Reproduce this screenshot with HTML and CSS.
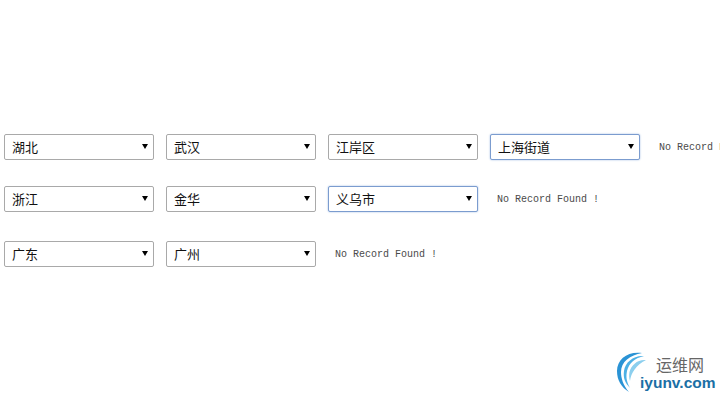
FILE: index.html
```html
<!DOCTYPE html>
<html lang="zh">
<head>
    <meta charset="UTF-8">
    <title>地区选择</title>
    <link rel="stylesheet" href="styles.css">
</head>
<body>
    <div class="region-list">
        <div class="region-row">
            <div class="picker"><select><option>湖北</option></select></div>
            <div class="picker"><select><option>武汉</option></select></div>
            <div class="picker"><select><option>江岸区</option></select></div>
            <div class="picker"><select class="focused"><option>上海街道</option></select></div>
            <span class="no-record">No Record Found !</span>
        </div>
        <div class="region-row">
            <div class="picker"><select><option>浙江</option></select></div>
            <div class="picker"><select><option>金华</option></select></div>
            <div class="picker"><select class="focused"><option>义乌市</option></select></div>
            <span class="no-record">No Record Found !</span>
        </div>
        <div class="region-row row-last">
            <div class="picker"><select><option>广东</option></select></div>
            <div class="picker"><select><option>广州</option></select></div>
            <span class="no-record">No Record Found !</span>
        </div>
    </div>

    <div class="watermark">
        <svg class="watermark-icon" width="60" height="50" viewBox="0 0 60 50">
            <path d="M32 8C18 6 7 14 7 26C7 35 11 42 19 47C13 40 11 33 11 27C11 17 20 10 32 8Z" fill="#2a93d5"/>
            <path d="M34 11C24 10 15 17 14 26C13 33 15 38 20 43C16 36 16 31 17 26C19 18 25 13 34 11Z" fill="#4cb0e5"/>
            <path d="M36 15C28 14 21 20 19.500 27C19 30 19 33 20 36C21 28 26 20 36 15Z" fill="#8ccfee"/>
        </svg>
        <div class="watermark-title">运维网</div>
        <div class="watermark-site">iyunv.com</div>
    </div>
</body>
</html>
```

FILE: styles.css
```css
html, body {
    height: 100%;
}
body {
    margin: 0;
    overflow: hidden;
    background: #fff;
    position: relative;
}
.region-list {
    padding: 134px 0 0 4px;
}
.region-row {
    display: flex;
    align-items: center;
    gap: 12px;
    width: 900px;
    margin-bottom: 26px;
}
.row-last {
    margin-top: 29px;
}
.picker {
    position: relative;
    width: 150px;
    height: 26px;
    flex: none;
}
.picker::after {
    content: "";
    position: absolute;
    right: 6px;
    top: 10px;
    border-left: 3.500px solid transparent;
    border-right: 3.500px solid transparent;
    border-top: 5px solid #000;
}
select {
    appearance: none;
    width: 100%;
    height: 100%;
    padding: 0 20px 2px 7px;
    box-sizing: border-box;
    background: #fff;
    border: 1px solid #a9a9a9;
    border-radius: 2px;
    outline: 0;
    color: #111;
    font-family: "Noto Sans CJK SC", sans-serif;
    font-size: 13px;
}
select.focused {
    border-color: #7b9ccf;
    box-shadow: 0 0 2px #9db8e0;
}
.no-record {
    margin-left: 7px;
    flex: none;
    color: #4a4a4a;
    font-family: "Liberation Mono", monospace;
    font-size: 10px;
}
.watermark {
    position: absolute;
    left: 610px;
    top: 345px;
    width: 110px;
    height: 50px;
}
.watermark-icon {
    position: absolute;
    left: 0;
    top: 0;
}
.watermark-title {
    position: absolute;
    left: 46px;
    top: 9px;
    color: #666;
    font-family: "Noto Sans CJK SC", sans-serif;
    font-size: 16px;
    line-height: 20px;
}
.watermark-site {
    position: absolute;
    left: 30px;
    top: 29px;
    color: #1b6fa5;
    font-family: "Liberation Sans", sans-serif;
    font-size: 15.500px;
    font-weight: bold;
    line-height: 18px;
}
```
